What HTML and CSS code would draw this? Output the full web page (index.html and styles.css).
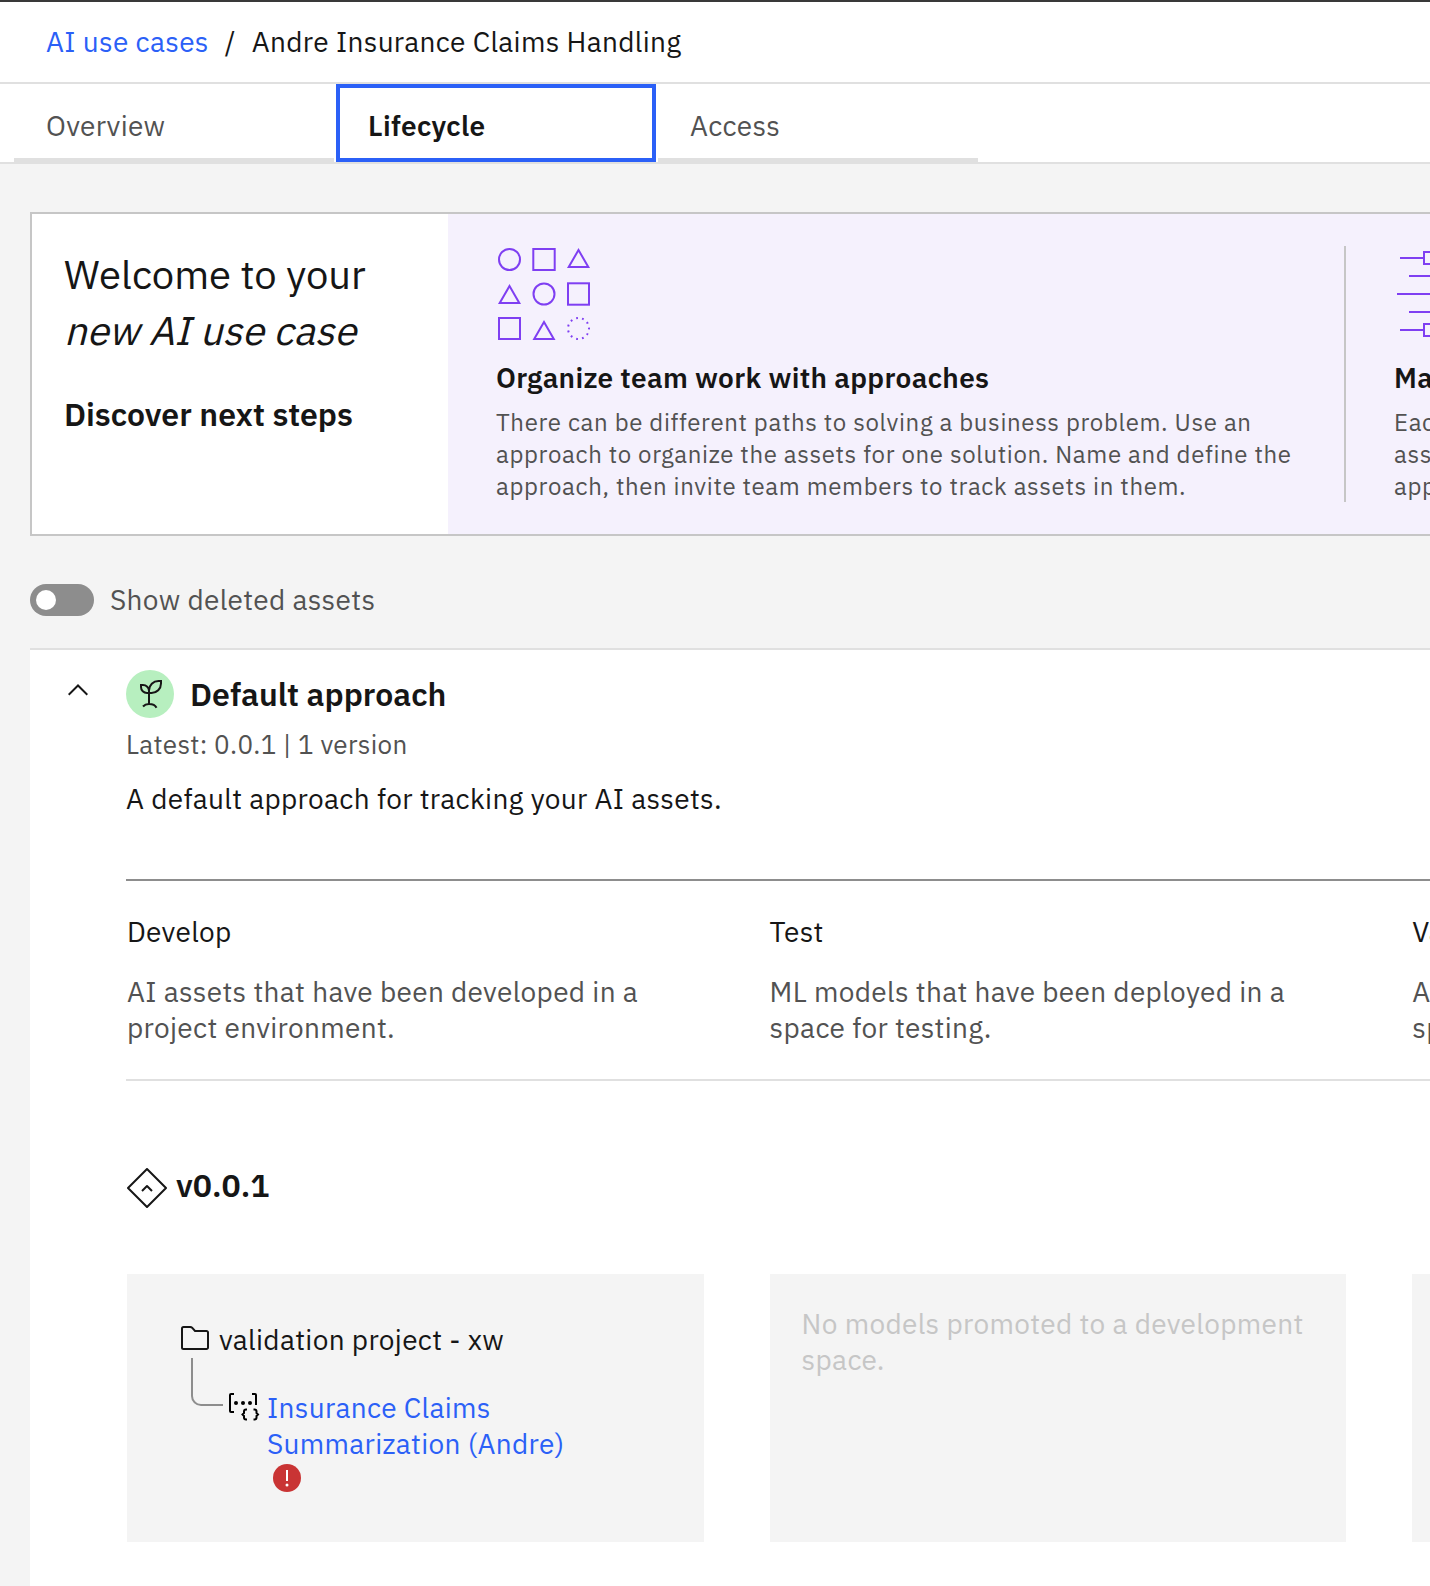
FILE: index.html
```html
<!DOCTYPE html>
<html lang="en">
<head>
<meta charset="utf-8">
<title>Andre Insurance Claims Handling</title>
<link rel="stylesheet" href="styles.css">
</head>
<body>
<header class="breadcrumb">
  <a class="crumb-link">AI use cases</a>
  <span class="crumb-sep">/</span>
  <span class="crumb-current">Andre Insurance Claims Handling</span>
</header>
<nav class="tabs">
  <a class="tab">Overview</a>
  <a class="tab tab-active">Lifecycle</a>
  <a class="tab">Access</a>
</nav>
<main class="content">
  <section class="banner">
    <div class="welcome">
      <h1 class="welcome-title">Welcome to your<br><em class="welcome-em">new AI use case</em></h1>
      <p class="welcome-next">Discover next steps</p>
    </div>
    <div class="steps">
      <article class="step">
        <svg class="step-icon" viewBox="0 0 96 96" fill="none" stroke="#7f3ff2" stroke-width="2">
          <circle cx="13.5" cy="13.5" r="10.5"/><rect x="37.3" y="3" width="21.4" height="21"/><path d="M82.5 4 92.3 21H72.7z"/>
          <path d="M13.5 40 23.3 57H3.7z"/><circle cx="48" cy="48" r="10.5"/><rect x="72" y="37.3" width="21" height="21.4"/>
          <rect x="3" y="72" width="21" height="21"/><path d="M48 76 57.8 93H38.2z"/><circle cx="82.5" cy="82.5" r="10.5" pathLength="66" stroke-dasharray="1.8 4.2" stroke-dashoffset=".9"/>
        </svg>
        <h2 class="step-title">Organize team work with approaches</h2>
        <p class="step-text">There can be different paths to solving a business problem. Use an<br>approach to organize the assets for one solution. Name and define the<br>approach, then invite team members to track assets in them.</p>
      </article>
      <article class="step step-next">
        <svg class="step-icon" viewBox="0 0 96 96" fill="none" stroke="#7f3ff2" stroke-width="2">
          <path d="M6 12h23M15 30h66M3 48h90M15 66h66M6 84h23M43 12h47M43 84h47"/><rect x="30" y="6" width="12" height="12"/><rect x="30" y="78" width="12" height="12"/>
        </svg>
        <h2 class="step-title">Ma</h2>
        <p class="step-text">Eac<br>ass<br>app</p>
      </article>
    </div>
  </section>
  <div class="toggle-row">
    <span class="toggle"><span class="knob"></span></span>
    <span class="toggle-label">Show deleted assets</span>
  </div>
  <section class="approach">
    <div class="collapse">
      <svg class="chevron" viewBox="0 0 20 12" fill="none" stroke="#161616" stroke-width="2"><path d="M.7 10.7 10 1.5l9.3 9.2"/></svg>
    </div>
    <div class="approach-body">
      <div class="approach-head">
        <svg class="sprout" viewBox="0 0 48 48" fill="none" stroke="#161616" stroke-width="2">
          <circle cx="24" cy="24" r="24" fill="#b7efbf" stroke="none"/>
          <path d="M15 15h2a6 6 0 0 1 6 6v2h-2a6 6 0 0 1-6-6zM35 11h-2.5a9.5 9.5 0 0 0-9.5 9.5V23h2.5a9.5 9.5 0 0 0 9.5-9.5zM23 21v13M17 36.5c1.500-1.700 3.500-2.500 6-2.500 3.500 0 6.300 1.200 7.500 3.700"/>
        </svg>
        <h2 class="approach-title">Default approach</h2>
      </div>
      <p class="approach-meta">Latest: 0.0.1 | 1 version</p>
      <p class="approach-desc">A default approach for tracking your AI assets.</p>
      <div class="phases">
        <div class="phase"><h3 class="phase-name">Develop</h3><p class="phase-text">AI assets that have been developed in a<br>project environment.</p></div>
        <div class="phase"><h3 class="phase-name">Test</h3><p class="phase-text">ML models that have been deployed in a<br>space for testing.</p></div>
        <div class="phase"><h3 class="phase-name">Va</h3><p class="phase-text">A<br>sp</p></div>
      </div>
      <div class="version">
        <svg class="version-icon" viewBox="0 0 40 40" fill="none" stroke="#161616" stroke-width="2" stroke-linejoin="round"><path d="M20 1 39 20 20 39 1 20zM15 23l5-5 5 5"/></svg>
        <h3 class="version-name">v0.0.1</h3>
      </div>
      <div class="cards">
        <div class="card card-assets">
          <div class="project">
            <svg class="folder" viewBox="0 0 30 26" fill="none" stroke="#161616" stroke-width="2"><path d="M2 3.5A1.5 1.5 0 0 1 3.5 2h6.8c.8 0 1.300.2 1.800.7L15 6h11.500A1.500 1.500 0 0 1 28 7.500v15a1.500 1.500 0 0 1-1.500 1.500h-23A1.500 1.500 0 0 1 2 22.500z"/></svg>
            <span class="project-name">validation project - xw</span>
          </div>
          <div class="asset">
            <span class="branch"></span>
            <svg class="prompt" viewBox="0 0 32 32" fill="none" stroke="#000" stroke-width="2"><path d="M6 2H3a1 1 0 0 0-1 1v16a1 1 0 0 0 1 1h3M24 2h3a1 1 0 0 1 1 1v10M19 17.500h-1a2 2 0 0 0-2 2v1.500l-1.500 1.500L16 24v1.500a2 2 0 0 0 2 2h1M25.500 17.500h1a2 2 0 0 1 2 2V21l1.500 1.500-1.500 1.500v1.500a2 2 0 0 1-2 2h-1"/><g fill="#000" stroke="none"><circle cx="8" cy="11" r="2"/><circle cx="15" cy="11" r="2"/><circle cx="22" cy="11" r="2"/></g></svg>
            <div class="asset-info">
              <a class="asset-link">Insurance Claims<br>Summarization (Andre)</a>
              <svg class="alert" viewBox="0 0 28 28"><circle cx="14" cy="14" r="14" fill="#c93434"/><path d="M14 6v11" stroke="#fff" stroke-width="2"/><circle cx="14" cy="21" r="1.5" fill="#fff"/></svg>
            </div>
          </div>
        </div>
        <div class="card card-empty">No models promoted to a development<br>space.</div>
        <div class="card"></div>
      </div>
    </div>
  </section>
</main>
</body>
</html>
```
FILE: styles.css
```css
* { box-sizing: border-box; margin: 0; padding: 0; }
html { overflow: hidden; }
body {
  width: 1430px; height: 1586px; overflow: hidden;
  background: #f4f4f4; color: #161616;
  font: 400 28px/36px "IBM Plex Sans", Roboto, "Noto Sans", sans-serif;
  letter-spacing: .32px;
}
svg { display: block; flex: none; }
h1, h2, h3 { font-weight: 600; }
p, span, a, h2, h3, em { white-space: nowrap; }

.breadcrumb { display: flex; align-items: center; height: 84px; padding-left: 46px; background: #fff; border-top: 2px solid #393939; border-bottom: 2px solid #e0e0e0; }
.crumb-link, .asset-link { color: #2b60f7; }
.crumb-sep { width: 43px; padding-left: 16px; }

.tabs { display: flex; gap: 2px; height: 80px; padding-left: 14px; background: #fff; border-bottom: 2px solid #e0e0e0; }
.tab { width: 320px; height: 78px; padding: 24px 0 0 32px; border-bottom: 4px solid #e0e0e0; color: #525252; }
.tab-active { padding: 20px 0 0 28px; border: 4px solid #2b60f7; color: #161616; font-weight: 600; }

.content { padding: 48px 0 0 30px; overflow: hidden; }
.banner { display: flex; width: 2240px; height: 324px; border: 2px solid #c6c6c6; background: #fff; letter-spacing: 0; }
.welcome { width: 416px; padding: 32px 0 0 32px; }
.welcome-title { font-size: 40px; line-height: 56px; font-weight: 400; }
.welcome-em { display: inline-block; font-style: normal; transform: skewX(-14deg); transform-origin: 0 43px; }
.welcome-next { margin-top: 36px; font-size: 32px; line-height: 40px; font-weight: 600; }
.steps { display: flex; flex: 1; padding: 32px 48px; background: #f5f1fd; }
.step { width: 850px; height: 256px; border-right: 2px solid #c6c6c6; }
.step-next { padding-left: 48px; }
.step-icon { width: 96px; height: 96px; }
.step-title { margin-top: 18px; font-size: 28px; line-height: 36px; letter-spacing: .32px; }
.step-text { margin-top: 10px; font-size: 24px; line-height: 32px; color: #525252; letter-spacing: .64px; }

.toggle-row { display: flex; align-items: center; gap: 16px; margin-top: 48px; height: 32px; color: #525252; }
.toggle { width: 64px; height: 32px; padding: 6px; border-radius: 16px; background: #8d8d8d; }
.knob { display: block; width: 20px; height: 20px; border-radius: 50%; background: #fff; }

.approach { display: flex; width: 2240px; height: 960px; margin-top: 32px; border-top: 2px solid #e0e0e0; background: #fff; }
.collapse { width: 96px; padding: 34px 0 0 38px; }
.chevron { width: 20px; height: 12px; }
.approach-body { flex: 1; padding-top: 20px; }
.approach-head { display: flex; align-items: center; gap: 16px; }
.sprout { width: 48px; height: 48px; }
.approach-title { font-size: 32px; line-height: 40px; letter-spacing: 0; }
.approach-meta { margin-top: 8px; font-size: 26px; line-height: 36px; color: #525252; }
.approach-desc { margin-top: 19px; height: 100px; border-bottom: 2px solid #8d8d8d; }

.phases { display: grid; grid-template-columns: repeat(3, 576.8px); column-gap: 65.8px; height: 200px; padding: 33px 0 0 1px; border-bottom: 2px solid #e0e0e0; }
.phase-name { font-size: 28px; font-weight: 400; }
.phase-text { margin-top: 24px; color: #525252; }

.version { display: flex; gap: 9px; margin-top: 87px; padding-left: 1px; }
.version-icon { width: 40px; height: 40px; }
.version-name { margin-top: -1px; font-size: 32px; line-height: 36px; letter-spacing: 0; }
.cards { display: grid; grid-template-columns: repeat(3, 576.8px); column-gap: 65.8px; margin-top: 66px; padding-left: 1px; }
.card { height: 268px; background: #f4f4f4; }
.card-assets { padding: 48px 0 0 53px; }
.card-empty { padding: 32px; color: #c6c6c6; }
.project { display: flex; gap: 9px; }
.folder { width: 30px; height: 26px; margin-top: 3px; }
.asset { display: flex; padding-left: 11px; }
.branch { width: 32px; height: 48px; border: solid #8d8d8d; border-width: 0 0 2px 2px; border-bottom-left-radius: 10px; }
.prompt { width: 32px; height: 32px; margin: 34px 0 0 5px; }
.asset-info { padding: 32px 0 0 7px; }
.alert { width: 28px; height: 28px; margin: 2px 0 0 6px; }
```
